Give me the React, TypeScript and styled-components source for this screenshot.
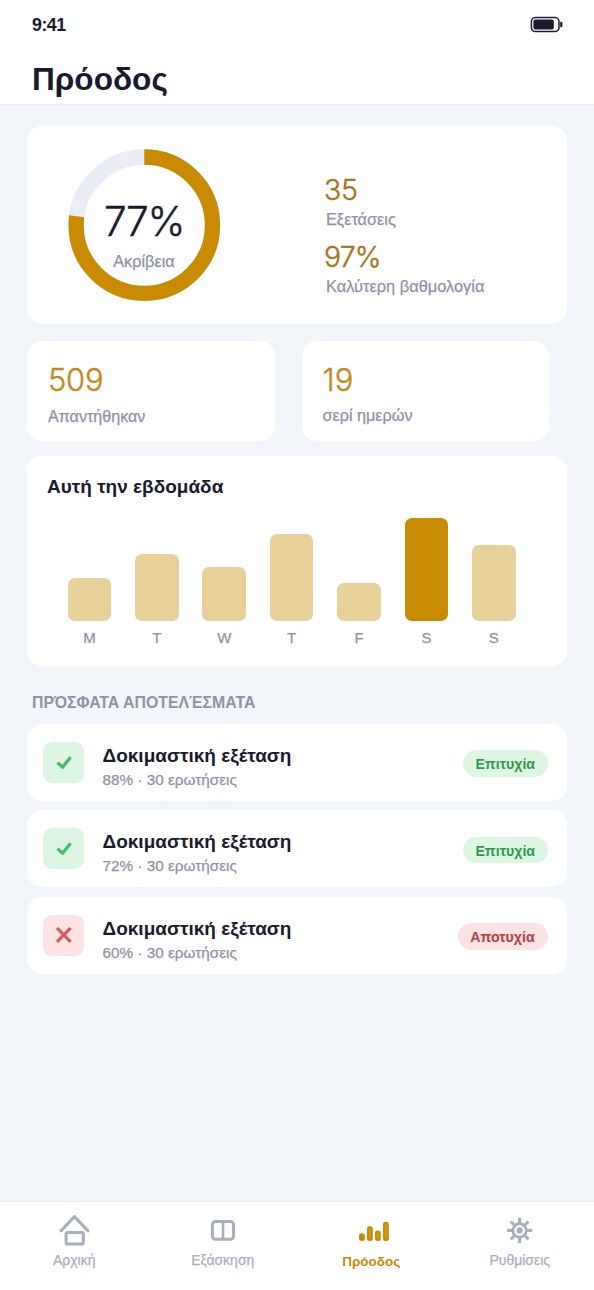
import React from "react";
import styled, { createGlobalStyle } from "styled-components";

const Global = createGlobalStyle`
  * { box-sizing: border-box; }
  body { margin: 0; background: #f2f6fb; font-family: "Liberation Sans", Arial, sans-serif; color: #1a1a2e; }
`;

const Screen = styled.div`
  width: 594px;
  height: 1290px;
  display: flex;
  flex-direction: column;
  background: #f2f6fb;
  overflow: hidden;
`;

const Header = styled.header`
  height: 105px;
  flex: none;
  background: #fff;
  border-bottom: 1px solid #eaecf2;
  padding: 15px 31px 0 32px;
`;

const StatusBar = styled.div`
  display: flex;
  justify-content: space-between;
  height: 20px;
`;

const Text = styled.div<{ $size: number; $line: number; $weight?: number; $color?: string; $track?: number }>`
  font-size: ${(p) => p.$size}px;
  line-height: ${(p) => p.$line}px;
  font-weight: ${(p) => p.$weight ?? 400};
  color: ${(p) => p.$color ?? "#8e93a6"};
  letter-spacing: ${(p) => p.$track ?? 0}px;
  -webkit-text-stroke: ${(p) => (p.$weight === 700 ? 0 : 0.25)}px;
  white-space: nowrap;
`;

const Figure = styled(Text)`
  font-family: Inter, "Liberation Sans", sans-serif;
  -webkit-text-stroke: 0.4px;
`;

const Title = styled(Text).attrs({ as: "h1" })`
  margin: 26px 0 0;
`;

const Content = styled.main`
  flex: 1;
  padding: 21px 27px 0;
`;

const Card = styled.section`
  background: #fff;
  border-radius: 15px;
`;

const Hero = styled(Card)`
  height: 198px;
  display: flex;
`;

const RingBox = styled.div`
  width: 297px;
  padding: 22px 0 0 40px;
  display: grid;
  grid-template-columns: 154px;
  align-content: start;
  > * { grid-area: 1 / 1; }
`;

const RingLabel = styled.div`
  display: flex;
  flex-direction: column;
  align-items: center;
  gap: 4px;
  padding-top: 49px;
`;

const HeroStats = styled.div`
  padding-top: 47px;
`;

const StatLabel = styled(Text)`
  margin: 0 0 9px 2px;
`;

const Stats = styled.div`
  display: grid;
  grid-template-columns: 247.5px 247.5px;
  column-gap: 27px;
  margin: 17px 0 15px;
`;

const Stat = styled(Card)`
  height: 100px;
  padding: 19px 21px 0;
`;

const Week = styled(Card)`
  height: 210px;
  padding: 20px 20px 0;
`;

const Chart = styled.div`
  display: grid;
  grid-template-columns: repeat(7, 43.5px);
  column-gap: 23.9px;
  padding-left: 20.7px;
  margin-top: 15px;
`;

const Day = styled.div`
  height: 135px;
  display: flex;
  flex-direction: column;
  justify-content: flex-end;
  align-items: center;
`;

const Bar = styled.div<{ $height: number; $active: boolean }>`
  width: 100%;
  height: ${(p) => p.$height}px;
  border-radius: 7px;
  background: ${(p) => (p.$active ? "#c98a04" : "#e8d09a")};
  margin-bottom: 7px;
`;

const SectionTitle = styled(Text).attrs({ as: "h2" })`
  margin: 27px 0 11px 5px;
`;

const Results = styled.div`
  display: flex;
  flex-direction: column;
  gap: 9.4px;
`;

const Result = styled(Card)`
  height: 77px;
  display: flex;
  align-items: center;
  padding: 0 19.5px 0 16px;
`;

const Mark = styled.div<{ $ok: boolean }>`
  width: 41px;
  height: 41px;
  border-radius: 9px;
  background: ${(p) => (p.$ok ? "#ddf6e4" : "#fce3e4")};
  display: grid;
  place-items: center;
`;

const ResultText = styled.div`
  flex: 1;
  margin-left: 18.5px;
  padding-top: 9px;
`;

const Badge = styled.div<{ $ok: boolean }>`
  width: ${(p) => (p.$ok ? 84.5 : 90)}px;
  height: 26.5px;
  border-radius: 14px;
  margin-top: 2px;
  display: flex;
  justify-content: center;
  background: ${(p) => (p.$ok ? "#ddf6e4" : "#fce3e4")};
`;

const Nav = styled.nav`
  flex: none;
  height: 89px;
  background: #fff;
  border-top: 1px solid #eaecf2;
  display: grid;
  grid-template-columns: repeat(4, 1fr);
`;

const NavItem = styled.a`
  display: flex;
  flex-direction: column;
  align-items: center;
  padding-top: 10px;
`;

const DAYS: [string, number][] = [
  ["M", 43.5], ["T", 67.3], ["W", 54.3], ["T", 87], ["F", 38], ["S", 103], ["S", 76],
];

const RESULTS: [string, boolean][] = [
  ["88% · 30 ερωτήσεις", true],
  ["72% · 30 ερωτήσεις", true],
  ["60% · 30 ερωτήσεις", false],
];

const Battery = () => (
  <svg width="34" height="18" viewBox="0 0 34 18" fill="none">
    <rect x="2.4" y="2.6" width="27.6" height="14" rx="4.2" stroke="#1a1a2e" strokeWidth="1.5" />
    <rect x="4.4" y="4.6" width="20.4" height="10" rx="2" fill="#1a1a2e" />
    <path d="M31.2 6.8h.8q1.4 0 1.4 1.2v3q0 1.2-1.4 1.2h-.8z" fill="#1a1a2e" />
  </svg>
);

const CIRC = 2 * Math.PI * 68.2;
const Ring = () => (
  <svg width="154" height="154" viewBox="0 0 154 154" fill="none" strokeWidth="15.3">
    <circle cx="77.3" cy="77.2" r="68.2" stroke="#eaedf5" />
    <circle cx="77.3" cy="77.2" r="68.2" stroke="#c98a04" strokeDasharray={`${CIRC * 0.77} ${CIRC}`} transform="rotate(-90 77.3 77.2)" />
  </svg>
);

const NAV_GREY = "#a8afbc";
const icons = {
  home: (
    <g stroke={NAV_GREY} strokeWidth="3" strokeLinecap="round" strokeLinejoin="round">
      <path d="M4 18.9 17.4 4.6 31 18.9" />
      <rect x="9.1" y="20.4" width="17.2" height="11.6" rx="1.6" />
    </g>
  ),
  book: (
    <g stroke={NAV_GREY} strokeWidth="3">
      <rect x="6.4" y="9.5" width="21.2" height="17.8" rx="3.2" />
      <path d="M17 9.5v17.8" strokeWidth="2.6" />
    </g>
  ),
  bars: (
    <g>
      {[[5, 21.2], [13, 14.2], [21, 18.4], [29, 9.8]].map(([x, y]) => (
        <g key={x}>
          <rect x={x} y={y} width="5.8" height={29 - y} rx="2.5" fill="#c98a04" />
          {y < 20 && <path d={`M${x + 2.9} ${y + 2.8}V26.2`} stroke="#dfb764" strokeWidth=".8" />}
        </g>
      ))}
    </g>
  ),
  gear: (
    <g stroke={NAV_GREY}>
      <circle cx="16.6" cy="18.4" r="6.7" strokeWidth="2.8" />
      <circle cx="16.6" cy="18.4" r="3.1" fill={NAV_GREY} stroke="none" />
      {[0, 45, 90, 135, 180, 225, 270, 315].map((a) => (
        <path key={a} d="M16.6 5.8v5" strokeWidth="3.1" transform={`rotate(${a} 16.6 18.4)`} />
      ))}
    </g>
  ),
};

const NAV: [keyof typeof icons, string, boolean][] = [
  ["home", "Αρχική", false],
  ["book", "Εξάσκηση", false],
  ["bars", "Πρόοδος", true],
  ["gear", "Ρυθμίσεις", false],
];

export default function App() {
  return (
    <Screen>
      <Global />
      <Header>
        <StatusBar>
          <Text $size={17.8} $line={21} $weight={700} $color="#1a1a2e" $track={-0.5}>9:41</Text>
          <Battery />
        </StatusBar>
        <Title $size={31.6} $line={37} $weight={700} $color="#1a1a2e">Πρόοδος</Title>
      </Header>
      <Content>
        <Hero>
          <RingBox>
            <Ring />
            <RingLabel>
              <Figure $size={40.5} $line={50} $weight={300} $color="#1a1a2e" $track={-1.4}>77%</Figure>
              <Text $size={16.3} $line={20}>Ακρίβεια</Text>
            </RingLabel>
          </RingBox>
          <HeroStats>
            <Figure $size={28.5} $line={34} $weight={300} $color="#a87412" $track={-0.3}>35</Figure>
            <StatLabel $size={16.3} $line={24}>Εξετάσεις</StatLabel>
            <Figure $size={28.5} $line={34} $weight={300} $color="#a87412" $track={-0.9}>97%</Figure>
            <StatLabel $size={16.4} $line={24}>Καλύτερη βαθμολογία</StatLabel>
          </HeroStats>
        </Hero>
        <Stats>
          <Stat>
            <Figure $size={31} $line={40} $weight={300} $color="#c48a1c" $track={-0.3}>509</Figure>
            <Text $size={16.1} $line={32}>Απαντήθηκαν</Text>
          </Stat>
          <Stat>
            <Figure $size={31} $line={40} $weight={300} $color="#c48a1c">19</Figure>
            <Text $size={16.2} $line={31}>σερί ημερών</Text>
          </Stat>
        </Stats>
        <Week>
          <Text $size={19} $line={22} $weight={700} $color="#1a1a2e">Αυτή την εβδομάδα</Text>
          <Chart>
            {DAYS.map(([label, height], i) => (
              <Day key={i}>
                <Bar $height={height} $active={i === 5} />
                <Text $size={15} $line={20}>{label}</Text>
              </Day>
            ))}
          </Chart>
        </Week>
        <SectionTitle $size={15.85} $line={20} $weight={700}>ΠΡΌΣΦΑΤΑ ΑΠΟΤΕΛΈΣΜΑΤΑ</SectionTitle>
        <Results>
          {RESULTS.map(([detail, ok]) => (
            <Result key={detail}>
              <Mark $ok={ok}>
                <svg width="20" height="20" viewBox="0 0 20 20" fill="none" strokeWidth="3.2" stroke={ok ? "#3dbf62" : "#e25555"}>
                  <path d={ok ? "M3.4 9.6 8.6 14.2 16.6 4.2" : "M3 3 16.6 16.8M16.6 3 3 16.8"} />
                </svg>
              </Mark>
              <ResultText>
                <Text $size={19} $line={26} $weight={700} $color="#1a1a2e">Δοκιμαστική εξέταση</Text>
                <Text $size={15.3} $line={22}>{detail}</Text>
              </ResultText>
              <Badge $ok={ok}>
                <Text $size={14.2} $line={28} $weight={700} $color={ok ? "#2f9c4d" : "#b84040"}>{ok ? "Επιτυχία" : "Αποτυχία"}</Text>
              </Badge>
            </Result>
          ))}
        </Results>
      </Content>
      <Nav>
        {NAV.map(([icon, label, active]) => (
          <NavItem key={icon}>
            <svg width="34" height="36" viewBox="0 0 34 36" fill="none" overflow="visible">{icons[icon]}</svg>
            <Text $size={active ? 13.5 : 14} $line={active ? 27 : 25} $weight={active ? 700 : 400} $color={active ? "#c98a04" : NAV_GREY}>{label}</Text>
          </NavItem>
        ))}
      </Nav>
    </Screen>
  );
}
